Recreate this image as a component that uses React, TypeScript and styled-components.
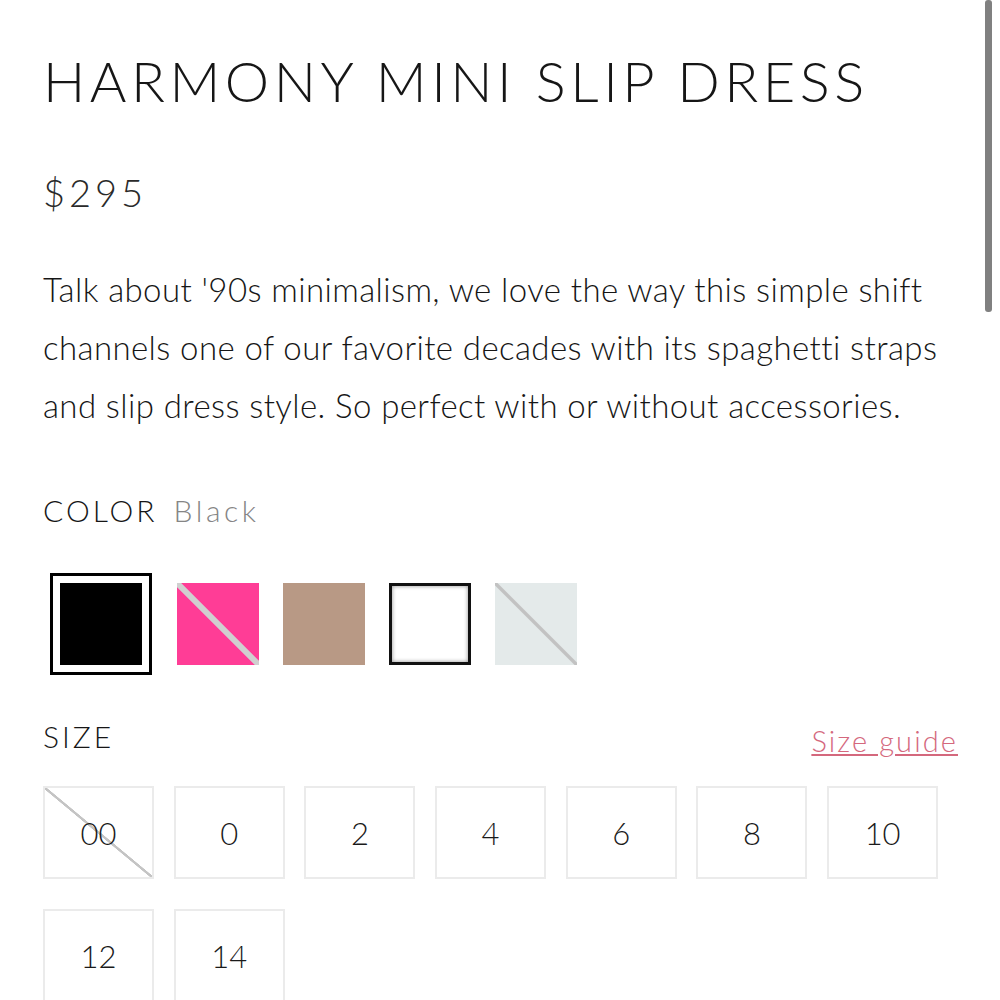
import React from 'react';
import styled, { createGlobalStyle } from 'styled-components';

const GlobalStyle = createGlobalStyle({
  'html, body': {
    background: '#ffffff',
    margin: 0,
    padding: 0,
  },
  body: {
    color: '#161616',
    fontFamily: 'Lato, "Noto Sans", sans-serif',
    fontWeight: 300,
  },
});

const Page = styled.div({
  boxSizing: 'border-box',
  padding: '49px 42px 0 43px',
  width: 1000,
});

const Title = styled.h1({
  fontSize: 56,
  fontWeight: 300,
  letterSpacing: 4.5,
  lineHeight: '64px',
  margin: 0,
  whiteSpace: 'nowrap',
});

const Price = styled.div({
  color: '#2a2a2a',
  fontSize: 38,
  letterSpacing: 4,
  lineHeight: '44px',
  marginTop: 57,
});

const Description = styled.p({
  fontSize: 33,
  letterSpacing: 0.4,
  lineHeight: '58px',
  margin: '46px 0 0',
});

const Label = styled.div({
  fontSize: 30,
  letterSpacing: 3,
  lineHeight: '36px',
  textTransform: 'uppercase',
});

const Chosen = styled.span({
  color: '#858585',
  letterSpacing: 3.6,
  marginLeft: 16,
  textTransform: 'none',
});

const ColorSection = styled.div({
  marginTop: 58,
});

const SwatchRow = styled.div({
  alignItems: 'center',
  display: 'flex',
  gap: 24,
  marginTop: 45,
});

const Swatch = styled.button<{ $selected?: boolean }>((props) => ({
  background: '#fff',
  border: props.$selected ? '3px solid #000' : 'none',
  boxSizing: 'border-box',
  cursor: 'pointer',
  display: 'flex',
  height: props.$selected ? 102 : 82,
  margin: props.$selected ? '0 1px 0 7px' : 0,
  padding: props.$selected ? 7 : 0,
  width: props.$selected ? 102 : 82,
}));

const Chip = styled.span<{ $color: string; $outline?: boolean; $slash?: string; $slashWidth?: number }>(
  (props) => {
    const w = (props.$slashWidth ?? 4) / 2;
    return {
      background: props.$slash
        ? `linear-gradient(to top right, ${props.$color} calc(50% - ${w + 1}px), ${props.$slash} calc(50% - ${w}px), ${props.$slash} calc(50% + ${w}px), ${props.$color} calc(50% + ${w + 1}px))`
        : props.$color,
      border: props.$outline ? '3px solid #111' : 'none',
      boxShadow: props.$outline ? 'inset 0 0 4px rgba(0,0,0,0.45)' : 'none',
      boxSizing: 'border-box',
      display: 'block',
      flex: 1,
      height: '100%',
      width: '100%',
    };
  },
);

const SizeSection = styled.div({
  marginTop: 43,
});

const SizeHead = styled.div({
  alignItems: 'flex-start',
  display: 'flex',
  justifyContent: 'space-between',
});

const SizeGuide = styled.a({
  color: '#d4687d',
  fontSize: 29,
  letterSpacing: 2.1,
  lineHeight: '36px',
  marginTop: 5,
  textDecoration: 'underline',
  textDecorationThickness: 1.5,
  textUnderlineOffset: 2,
});

const SizeGrid = styled.div({
  display: 'grid',
  gap: '30px 19.7px',
  gridTemplateColumns: 'repeat(7, 111px)',
  marginTop: 27,
});

const SizeBox = styled.button<{ $soldOut?: boolean }>((props) => ({
  background: props.$soldOut
    ? 'linear-gradient(to top right, transparent calc(50% - 1.5px), #c4c4c4 calc(50% - 1px), #c4c4c4 calc(50% + 1px), transparent calc(50% + 1.5px))'
    : '#fff',
  border: '2px solid #ebebeb',
  boxSizing: 'border-box',
  color: '#1a1a1a',
  cursor: 'pointer',
  fontFamily: 'inherit',
  fontSize: 31,
  fontWeight: 300,
  height: 93,
  padding: 0,
  width: 111,
}));

const Scrollbar = styled.div({
  background: '#808080',
  borderRadius: 3,
  height: 312,
  position: 'fixed',
  right: 8,
  top: 0,
  width: 7,
});

const swatches = [
  { color: '#000000', selected: true },
  { color: '#ff3d96', slash: '#d0d0d0', slashWidth: 5 },
  { color: '#b89985' },
  { color: '#ffffff', outline: true },
  { color: '#e4eaea', slash: '#c2c2c2', slashWidth: 2.5 },
];

const sizes = ['00', '0', '2', '4', '6', '8', '10', '12', '14'];

const App: React.FC = () => {
  return (
    <>
      <GlobalStyle />
      <Page>
        <Title>HARMONY MINI SLIP DRESS</Title>
        <Price>$295</Price>
        <Description>
          Talk about '90s minimalism, we love the way this simple shift channels one of our
          favorite decades with its spaghetti straps and slip dress style. So perfect with or
          without accessories.
        </Description>
        <ColorSection>
          <Label>
            Color
            <Chosen>Black</Chosen>
          </Label>
          <SwatchRow>
            {swatches.map((s) => (
              <Swatch key={s.color} $selected={s.selected}>
                <Chip
                  $color={s.color}
                  $outline={s.outline}
                  $slash={s.slash}
                  $slashWidth={s.slashWidth}
                />
              </Swatch>
            ))}
          </SwatchRow>
        </ColorSection>
        <SizeSection>
          <SizeHead>
            <Label>Size</Label>
            <SizeGuide href="#">Size guide</SizeGuide>
          </SizeHead>
          <SizeGrid>
            {sizes.map((s) => (
              <SizeBox key={s} $soldOut={s === '00'}>
                {s}
              </SizeBox>
            ))}
          </SizeGrid>
        </SizeSection>
      </Page>
      <Scrollbar />
    </>
  );
};

export default App;
